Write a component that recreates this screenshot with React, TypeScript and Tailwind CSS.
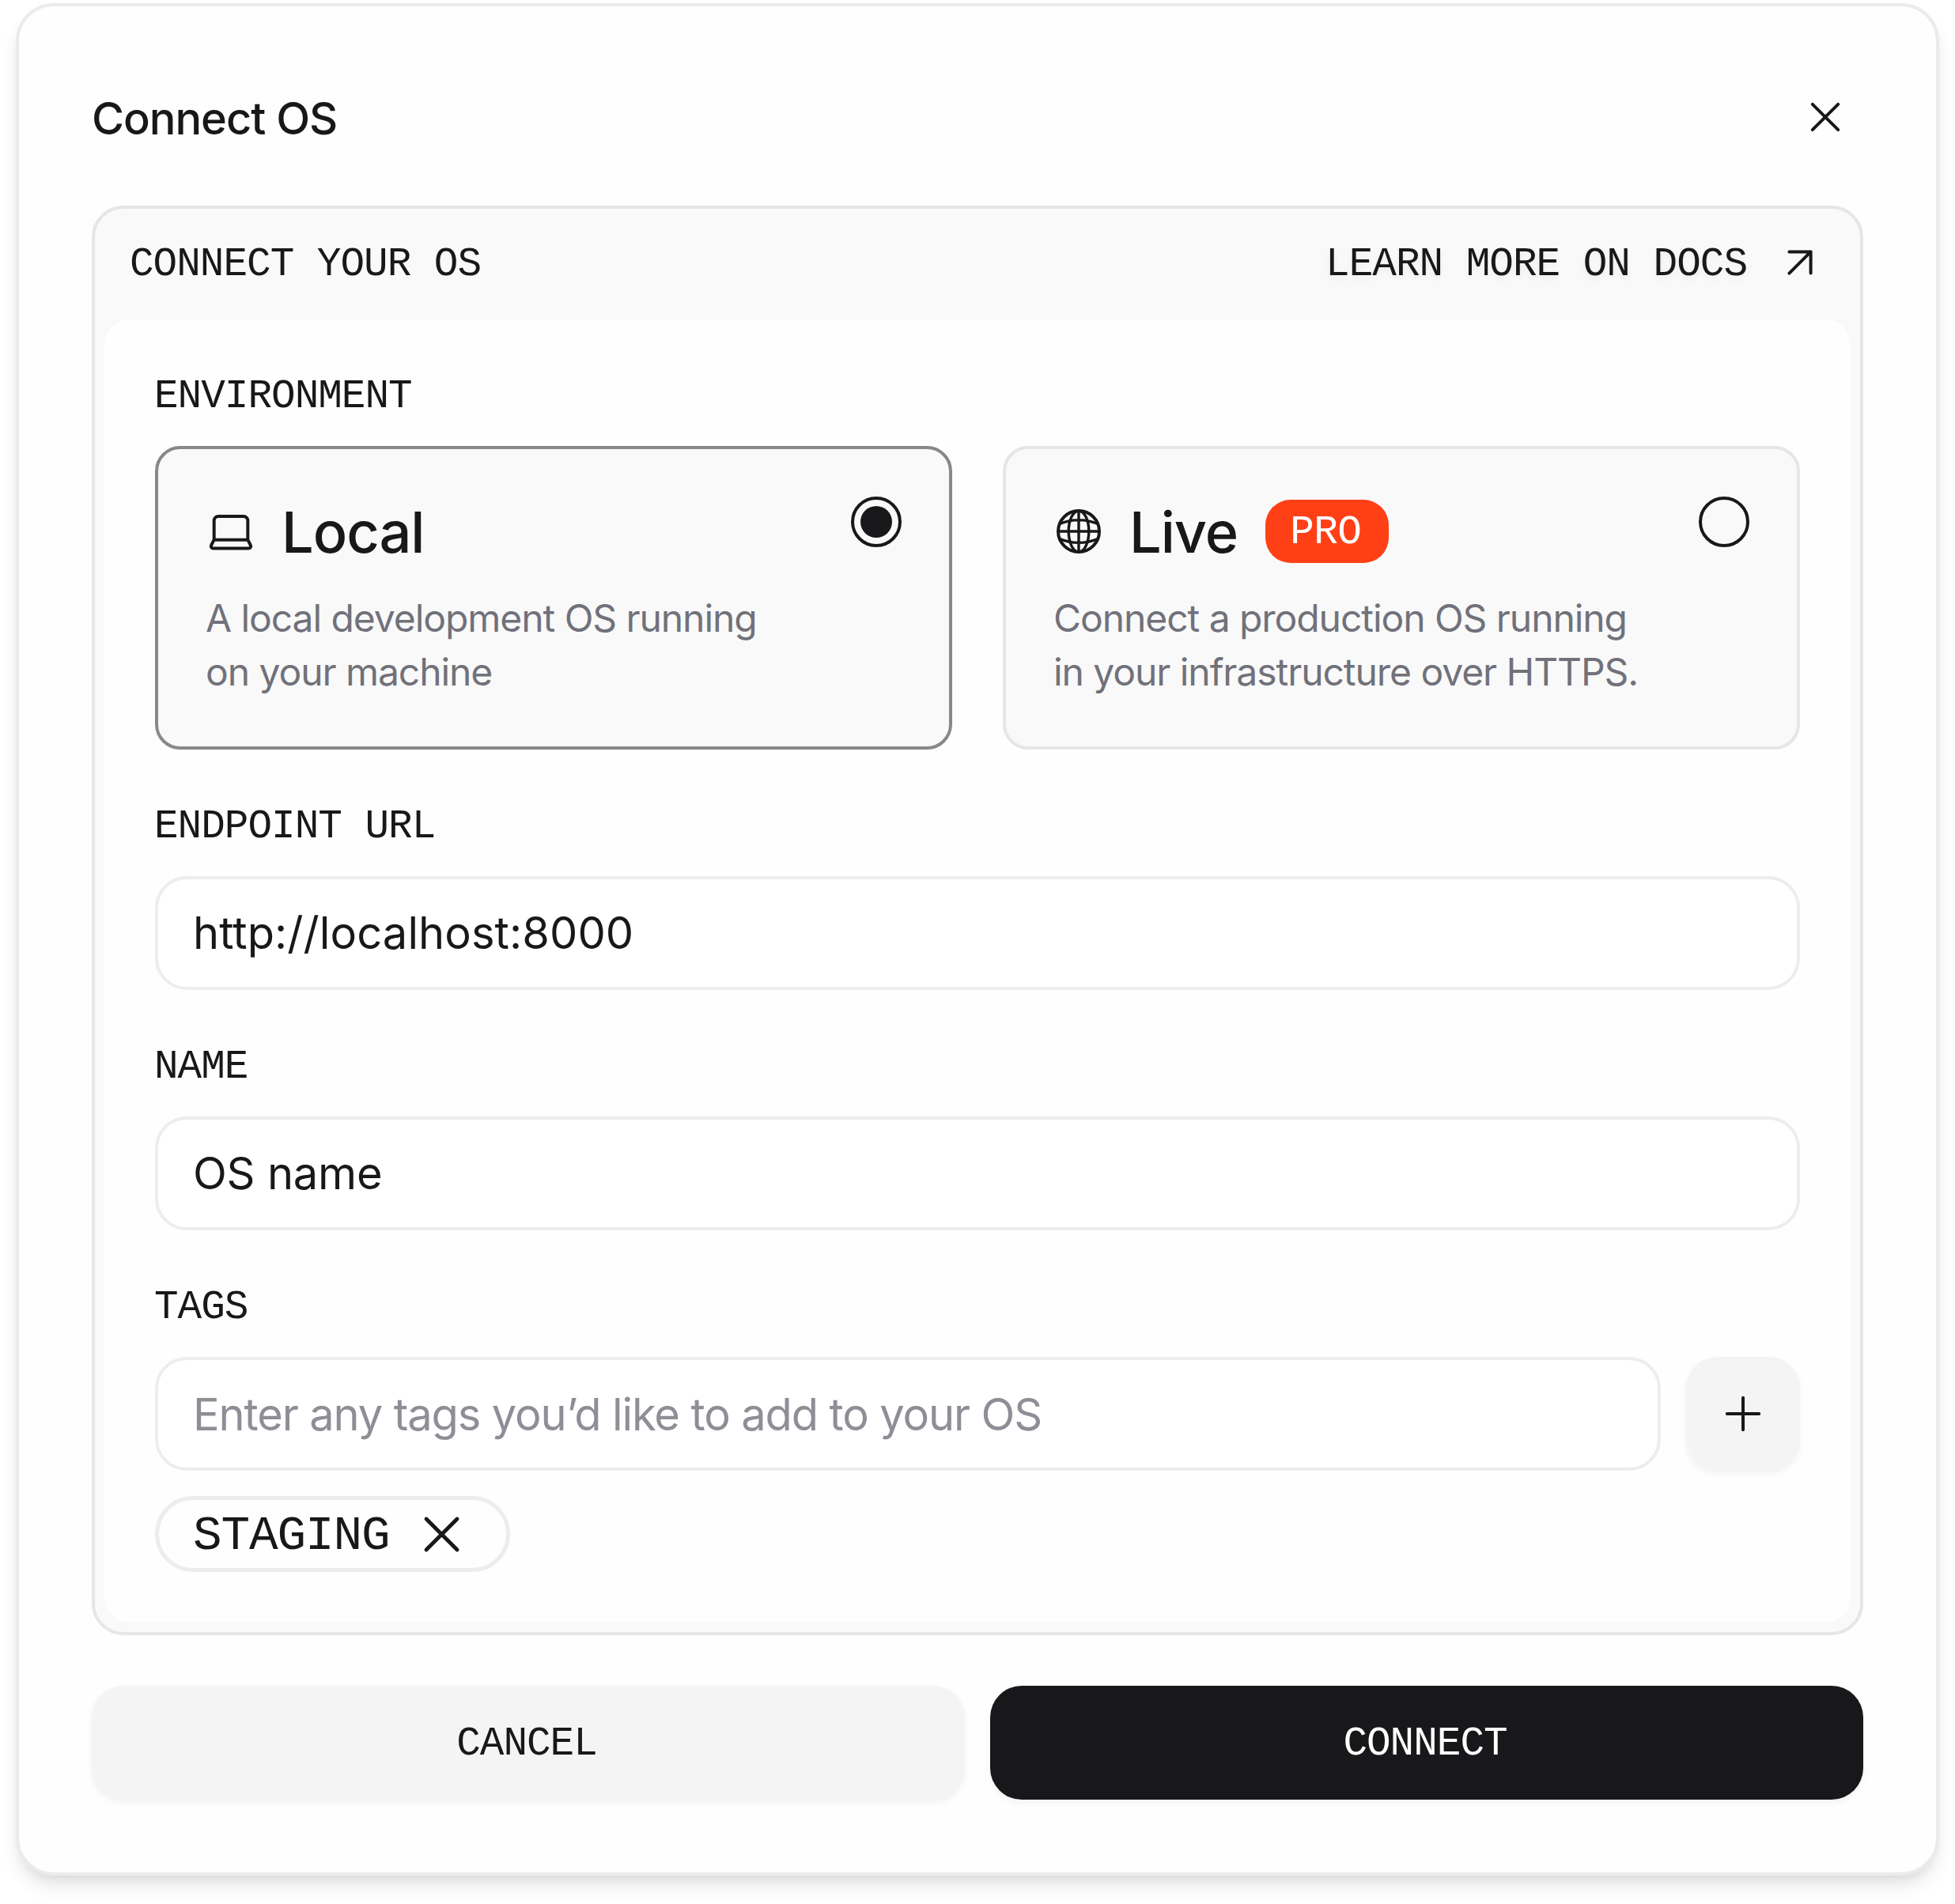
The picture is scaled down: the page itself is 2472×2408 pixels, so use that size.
import type { ReactNode } from "react";

const mono = "font-['Liberation_Mono',monospace] text-[51px] tracking-[-1px]";

function Stroke({ d, size, className = "", children }: { d: string; size: string; className?: string; children?: ReactNode }) {
  return (
    <svg viewBox="0 0 16 16" className={`${size} shrink-0 ${className}`} fill="none" stroke="currentColor" strokeWidth={1} strokeLinecap="round" strokeLinejoin="round">
      <path d={d} />
      {children}
    </svg>
  );
}

const CROSS = "M3.95 3.95l8.1 8.1M12.05 3.95l-8.1 8.1";

function Laptop() {
  return (
    <Stroke
      size="size-16"
      d="M2.67 10.67V4.6A1.33 1.33 0 0 1 4 3.25h8a1.33 1.33 0 0 1 1.33 1.35v6.07M2.67 10.67h10.66l.85 1.65c.3.55-.05 1.03-.6 1.03H2.42c-.55 0-.9-.48-.6-1.03z"
    />
  );
}

function Globe() {
  return (
    <Stroke size="size-16" d="M8 1.5a6.5 6.5 0 1 0 0 13a6.5 6.5 0 1 0 0-13z">
      <g strokeWidth={0.85}>
        <ellipse cx={8} cy={8} rx={3.2} ry={6.5} />
        <path d="M8 1.5v13M1.5 8h13M2 5.6Q8 3.2 14 5.6M2 10.4Q8 12.8 14 10.4" />
      </g>
    </Stroke>
  );
}

function Label({ children }: { children: ReactNode }) {
  return <div className={`${mono} -ml-px h-12 pt-[2px] leading-[48px]`}>{children}</div>;
}

function Env({ icon, title, badge, lines, selected }: { icon: ReactNode; title: string; badge?: string; lines: string[]; selected?: boolean }) {
  return (
    <div className={`flex h-[384px] items-start justify-between rounded-[32px] border-4 bg-[#f9f9f9] p-[60px] ${selected ? "border-[#888889]" : "border-[#e6e6e6]"}`}>
      <div>
        <div className="mt-1 flex h-20 items-center">
          {icon}
          <span className="ml-8 pt-[2px] text-[72px] font-medium leading-[80px] tracking-[-1px]">{title}</span>
          {badge && (
            <span className="ml-[35px] flex h-20 w-[156px] items-center rounded-[32px] bg-[#ff4017] pl-[31px] pt-1 font-['Liberation_Mono',monospace] text-[51px] tracking-[-0.6px] text-white">
              {badge}
            </span>
          )}
        </div>
        <div className="mt-9 text-[48px] leading-[68px] tracking-[-1.06px] text-[#71717a]">
          {lines.map((l) => (
            <div key={l} className="whitespace-nowrap">{l}</div>
          ))}
        </div>
      </div>
      <div className="flex size-16 shrink-0 items-center justify-center rounded-full border-4 border-[#18181b]">
        {selected && <div className="size-10 rounded-full bg-[#18181b]" />}
      </div>
    </div>
  );
}

function Input({ children, className = "" }: { children: ReactNode; className?: string }) {
  return (
    <div className={`flex h-36 items-center rounded-[40px] border-4 border-[#ededed] bg-white px-11 text-[56px] ${className}`}>{children}</div>
  );
}

export default function App() {
  return (
    <div className="h-[2408px] w-[2472px] overflow-hidden bg-white px-5 pt-1 font-['Inter',sans-serif] text-[#18181b]">
      <div className="flex h-[2368px] flex-col rounded-[48px] border-4 border-[#ebebeb] bg-[#fefefe] px-[92px] pt-[92px] shadow-[0_16px_24px_-4px_rgba(0,0,0,0.1),0_8px_16px_-8px_rgba(0,0,0,0.1)]">
        <div className="flex h-24 items-center justify-between">
          <h1 className="pt-1 text-[56px] font-medium leading-[80px] tracking-[-1.04px]">Connect OS</h1>
          <Stroke d={CROSS} size="size-16" className="mr-4" />
        </div>

        <div className="mt-[64px] flex h-[1808px] flex-col rounded-[40px] border-4 border-[#e6e6e6] bg-[#f9f9f9] px-3 pb-3">
          <div className="flex h-[140px] items-center justify-between px-8">
            <span className={`${mono} pt-[2px]`}>CONNECT YOUR OS</span>
            <span className="flex items-center gap-[35px]">
              <span className={`${mono} pt-[2px] [text-shadow:0_4px_8px_rgba(0,0,0,0.06)]`}>LEARN MORE ON DOCS</span>
              <Stroke d="M4.6 4.6h6.8v6.8M11.4 4.6l-6.8 6.8" size="size-16" className="mb-1" />
            </span>
          </div>
          <div className="flex grow flex-col rounded-[32px] bg-[#fefefe] px-16 pt-[72px]">
            <Label>ENVIRONMENT</Label>
            <div className="mt-10 grid grid-cols-2 gap-16">
              <Env selected icon={<Laptop />} title="Local" lines={["A local development OS running", "on your machine"]} />
              <Env icon={<Globe />} title="Live" badge="PRO" lines={["Connect a production OS running", "in your infrastructure over HTTPS."]} />
            </div>
            <div className="mt-[72px]"><Label>ENDPOINT URL</Label></div>
            <Input className="mt-10 tracking-[0.1px]">http://localhost:8000</Input>
            <div className="mt-[72px]"><Label>NAME</Label></div>
            <Input className="mt-10 tracking-[-0.2px]">OS name</Input>
            <div className="mt-[72px]"><Label>TAGS</Label></div>
            <div className="mt-10 flex gap-8">
              <Input className="grow pt-[2px] tracking-[-1.12px] text-[#8e8e96]">Enter any tags you’d like to add to your OS</Input>
              <button className="flex size-36 items-center justify-center rounded-[40px] bg-[#f4f4f4] shadow-[0_4px_8px_rgba(0,0,0,0.05)]">
                <Stroke d="M8 2.95v10.1M2.95 8h10.1" size="size-16" />
              </button>
            </div>
            <div className="mt-8 flex h-24 w-[449px] items-center gap-[27px] rounded-full border-[5px] border-[#ededed] pl-[43px]">
              <span className="pt-[5px] font-['Liberation_Mono',monospace] text-[61px] tracking-[-1.1px]">STAGING</span>
              <Stroke d={CROSS} size="size-[77px]" />
            </div>
          </div>
        </div>

        <div className="mt-16 grid grid-cols-2 gap-8">
          <button className={`${mono} h-36 rounded-[40px] bg-[#f4f4f4] pr-1 pt-1 shadow-[0_4px_8px_rgba(0,0,0,0.05)]`}>CANCEL</button>
          <button className={`${mono} h-36 rounded-[40px] bg-[#18181b] pr-1 pt-1 text-white shadow-[0_4px_8px_rgba(0,0,0,0.05)]`}>CONNECT</button>
        </div>
      </div>
    </div>
  );
}
